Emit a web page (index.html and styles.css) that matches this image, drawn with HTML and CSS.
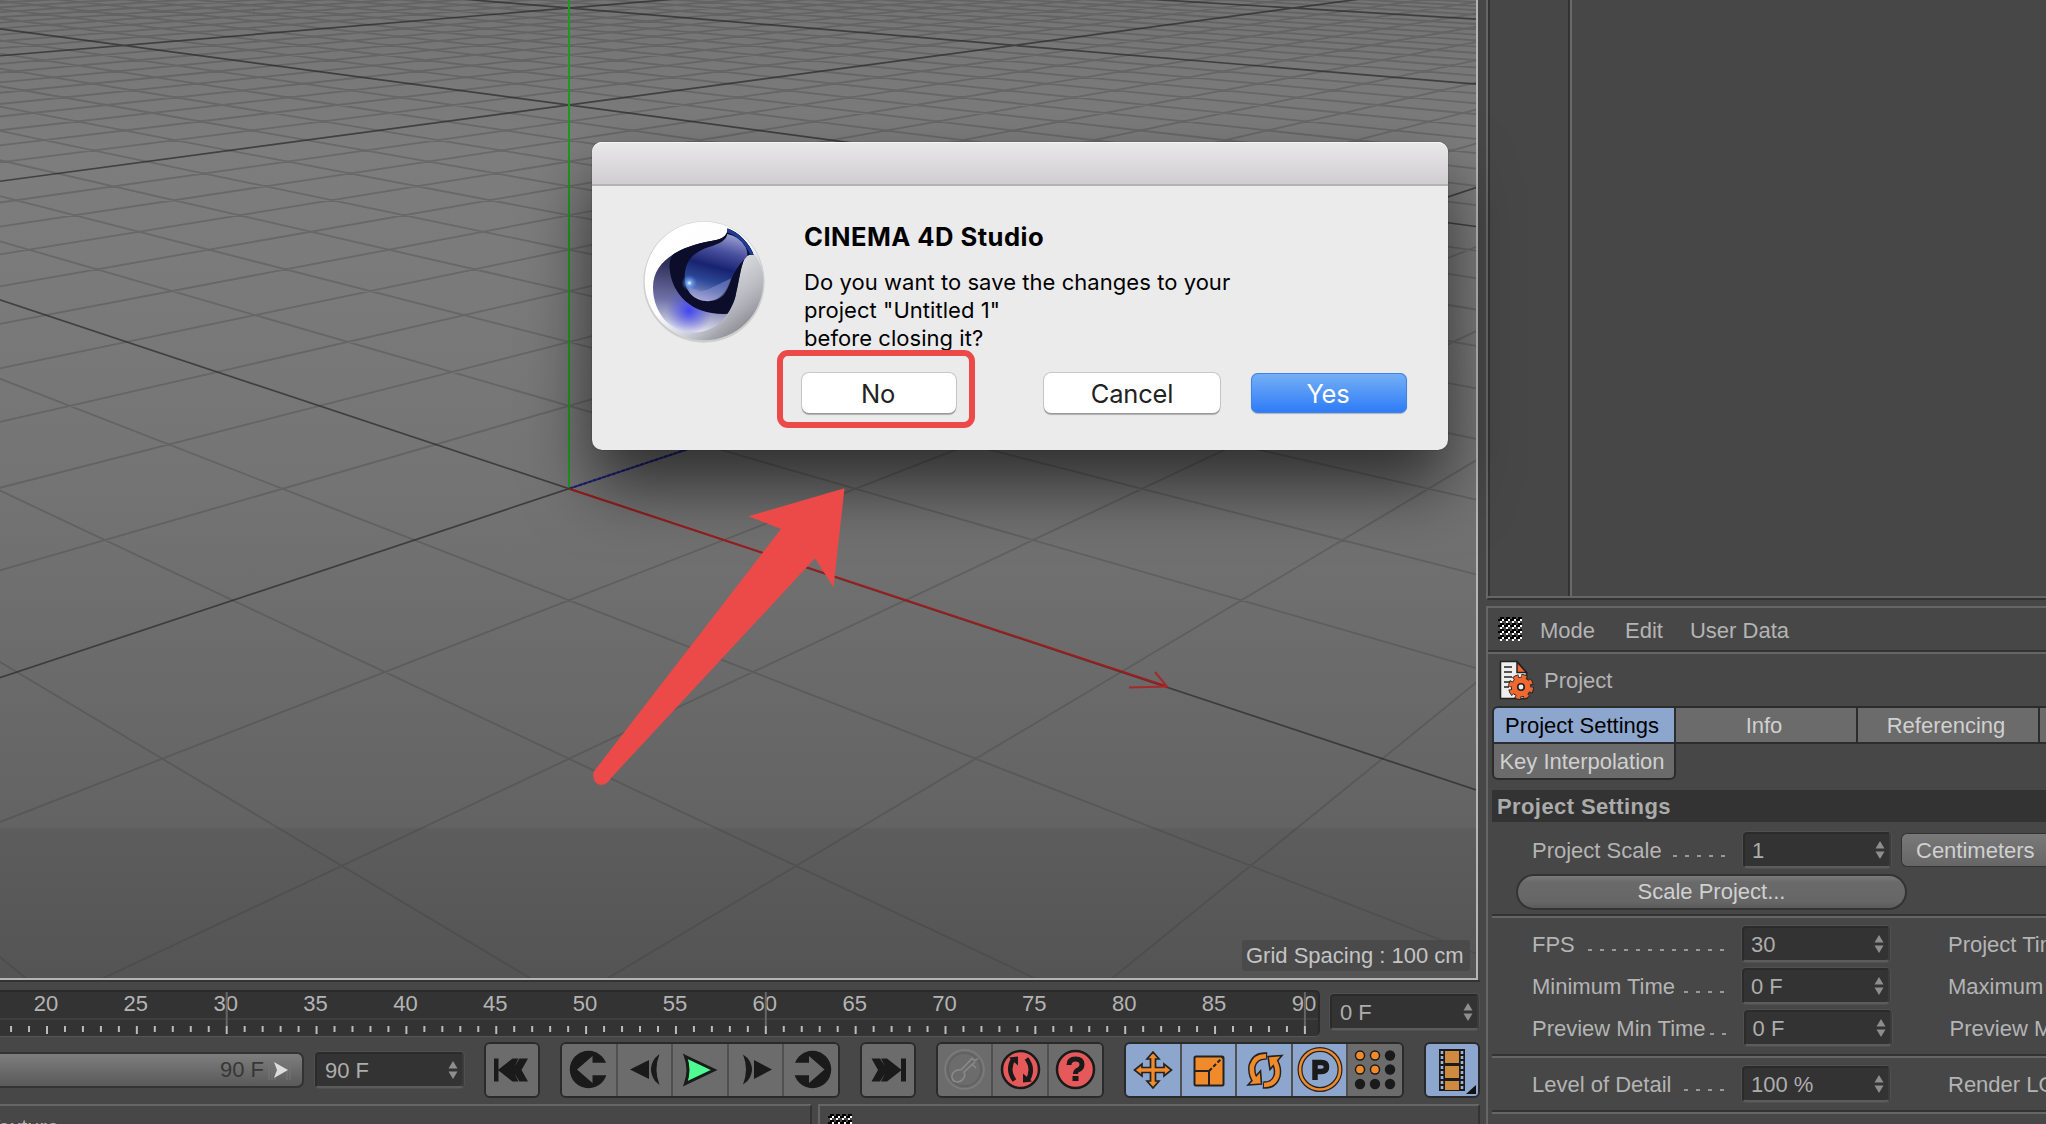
FILE: index.html
```html
<!DOCTYPE html>
<html lang="en">
<head>
<meta charset="utf-8">
<title>CINEMA 4D Studio</title>
<link rel="stylesheet" href="styles.css">
</head>
<body>
<svg class="defs" width="0" height="0" aria-hidden="true">
  <defs>
    <pattern id="grip-dots" width="6" height="6" patternUnits="userSpaceOnUse">
      <path d="M2 0h4v2h-2v2h-4v-2h2z" fill="#000"/><path d="M4 2h2v2h-2zM2 4h2v2h-2z" fill="#fff"/>
    </pattern>
    <symbol id="grip" viewBox="0 0 24 24"><rect width="24" height="24" fill="url(#grip-dots)"/></symbol>
    <symbol id="spin" viewBox="0 0 10 18"><path d="M5 0l4.500 7.500h-9zM5 18l4.500-7.500h-9z" fill="#8e8e8e"/></symbol>
  </defs>
</svg>

<div class="app">
  <main class="left">
    <section class="viewport">
      <svg class="scene" width="1476" height="978" viewBox="0 0 1476 978">
        <g id="grid"></g>
        <path d="M569 0V488" stroke="#1c9a1c" stroke-width="2"/>
        <path d="M569 488.700L700 445" stroke="#1b1b86" stroke-width="2" stroke-dasharray="4 1"/>
        <path d="M569 488.700L1167 686.500" stroke="#a01c1c" stroke-width="2"/>
        <path d="M1129 687.500L1167 686.500L1155 672" stroke="#a52a2a" stroke-width="2" fill="none"/>
      </svg>
      <div class="spacing">Grid Spacing : 100 cm</div>
    </section>

    <section class="timeline">
      <div class="ruler"><svg id="ruler" width="1318" height="45" viewBox="0 0 1318 45"></svg></div>
      <div class="field now"><span>0 F</span><svg class="spin"><use href="#spin"/></svg></div>
    </section>

    <section class="transport">
      <div class="range"><span>90 F</span><svg width="26" height="24" viewBox="0 0 26 24"><path d="M2 2v20M5 2v20M8 2v20M20 2v20M23 2v20" stroke="#777" stroke-width="1"/><path d="M7 4l14 8-14 8 3-8z" fill="#ddd"/></svg></div>
      <div class="field end"><span>90 F</span><svg class="spin"><use href="#spin"/></svg></div>

      <div class="group g1"><div class="btn"><svg viewBox="0 0 52 52"><path d="M8 14.500h4.500v11l14-11h6l-4 8 5-8h8.500l-6.500 11.500 6.500 11.500h-8.500l-5-8 4 8h-6l-14-11v11h-4.500z" fill="#1a1a1a"/></svg></div></div>

      <div class="group g2">
        <div class="btn"><svg viewBox="0 0 52 52"><circle cx="25.500" cy="25.500" r="18.700" fill="#1a1a1a"/><path d="M14 25.500L29.500 12v6.700H48v12.600H29.500V39z" fill="#6c6c6c"/></svg></div>
        <div class="btn"><svg viewBox="0 0 52 52"><path d="M12 25.500L31 16v19z M41.500 10q-6 15.500 0 31l-4.500-4q-8-11.500 0-23z" fill="#1a1a1a"/></svg></div>
        <div class="btn"><svg viewBox="0 0 52 52"><path d="M11.500 12.500L40 26 11.500 39.500q5-13.500 0-27z" fill="#4dfb92" stroke="#1a1a1a" stroke-width="3"/></svg></div>
        <div class="btn"><svg viewBox="0 0 52 52"><path d="M42 25.500L24 16v19z M13 10.500q6 15 0 30l4.500-3.500q9-11.500 0-23z" fill="#1a1a1a"/></svg></div>
        <div class="btn"><svg viewBox="0 0 52 52"><circle cx="27.500" cy="25.500" r="18.700" fill="#1a1a1a"/><path d="M39.500 25.500L24 12v6.700H6v12.600h18V39z" fill="#6c6c6c"/></svg></div>
      </div>

      <div class="group g3"><div class="btn"><svg viewBox="0 0 52 52"><path d="M44 14.500h-5v11l-14-11h-6l4 8-5-8H9.500l6.500 11.500-6.500 11.500H18l5-8-4 8h6l14-11v11h5z" fill="#1a1a1a"/></svg></div></div>

      <div class="group g4">
        <div class="btn"><svg viewBox="0 0 52 52"><g fill="none" stroke="#8b8b8b" stroke-width="1.500"><circle cx="25.500" cy="25.500" r="19.500" stroke="#7d7d7d"/><circle cx="25.500" cy="25.500" r="16.500" stroke="#606060"/><path d="M22 26L33 14.500l3 2 3-2M33 20l4 4M24.500 28.500L36 18M22 26c-5-1-10 3-9 8s8 5 11 1 2-5 .5-6.500"/></g></svg></div>
        <div class="btn"><svg viewBox="0 0 52 52"><circle cx="26.500" cy="25.500" r="18.500" fill="#e5595a" stroke="#1a1a1a" stroke-width="2.500"/><path d="M20.500 36.500q-8-10.500-1-22M32.500 14.500q8 10.500 1 22" stroke="#1a1a1a" stroke-width="4.500" fill="none"/><path d="M15 13.500l9-1v9zM38 37.500l-9 1v-9z" fill="#1a1a1a"/></svg></div>
        <div class="btn"><svg viewBox="0 0 52 52"><circle cx="26.500" cy="25.500" r="18.500" fill="#e5595a" stroke="#1a1a1a" stroke-width="2.500"/><path d="M20 21q0-6 6.500-6t6.500 5.500q0 4-4 5.500-2.500 1-2.500 4" stroke="#1a1a1a" stroke-width="5" fill="none"/><rect x="23.500" y="32" width="6" height="5" fill="#1a1a1a"/></svg></div>
      </div>

      <div class="group g5">
        <div class="btn on"><svg viewBox="0 0 52 52"><path d="M26 8l6 7h-3.500v8.500H37V20l7.500 6-7.500 6v-3.500h-8.500V37H32l-6 7-6-7h3.500v-8.500H15V32l-7.500-6 7.500-6v3.500h8.500V15H20z" fill="#f08a2a" stroke="#222" stroke-width="1.700"/></svg></div>
        <div class="btn on"><svg viewBox="0 0 52 52"><rect x="12.500" y="12.500" width="29" height="29" rx="1.500" fill="#f08a2a" stroke="#222" stroke-width="2"/><path d="M12.500 27H27v14.500" fill="none" stroke="#222" stroke-width="2"/><path d="M27 27L41 13" stroke="#222" stroke-width="2" stroke-dasharray="4 2"/></svg></div>
        <div class="btn on"><svg viewBox="0 0 52 52"><g fill="none"><path d="M29 12q-12-1-15 10-1 9 4 15M25 41q11 1 14-9 2-9-4-17" stroke="#222" stroke-width="7.500"/></g><path d="M44 11.500l-14 1 2 13zM10 41l13.500-1-1-13z" fill="#f08a2a" stroke="#222" stroke-width="1.600"/><path d="M28 12.200q-11-.5-14 9.800-1 9 4 15M26 41q10 0 13-9 2-9-4-17" stroke="#f08a2a" stroke-width="4.600" fill="none"/></svg></div>
        <div class="btn on"><svg viewBox="0 0 52 52"><circle cx="26" cy="25.500" r="20" fill="none" stroke="#222" stroke-width="5"/><circle cx="26" cy="25.500" r="20" fill="none" stroke="#f08a2a" stroke-width="2.600"/><path d="M21 36V18.500h6.500q5 0 5 4.500t-5 4.500H21" fill="none" stroke="#1a1a1a" stroke-width="5.500"/></svg></div>
        <div class="btn"><svg viewBox="0 0 52 52"><g fill="#1a1a1a"><circle cx="11" cy="11.500" r="5.200"/><circle cx="26" cy="11.500" r="5.200"/><circle cx="41" cy="11.500" r="5.200"/><circle cx="11" cy="25.500" r="5.200"/><circle cx="26" cy="25.500" r="5.200"/><circle cx="41" cy="25.500" r="5.200"/><circle cx="11" cy="40" r="5.200"/><circle cx="26" cy="40" r="5.200"/><circle cx="41" cy="40" r="5.200"/></g><g fill="#f08a2a"><circle cx="11" cy="11.500" r="3.800"/><circle cx="26" cy="11.500" r="3.800"/><circle cx="11" cy="25.500" r="3.800"/><circle cx="26" cy="25.500" r="3.800"/></g></svg></div>
      </div>

      <div class="group g6"><div class="btn on"><svg viewBox="0 0 52 52"><rect x="13" y="5" width="26" height="42" fill="#1a1a1a"/><path d="M19 7h14v12H19zM19 22h14v12H19zM19 37h14v9H19z" fill="#cf8a42"/><path d="M16 7v40M36 7v40" stroke="#9fb4d8" stroke-width="2.600" stroke-dasharray="3 2"/><path d="M50 41v9H40z" fill="#111"/></svg></div></div>
    </section>

    <section class="bottom">
      <div class="pane textures"><span>Texture</span></div>
      <div class="pane coords"><svg class="grip"><use href="#grip"/></svg></div>
    </section>
  </main>

  <aside class="right">
    <div class="objects"><div class="tree"></div></div>
    <div class="attributes">
      <nav class="menu"><svg class="grip"><use href="#grip"/></svg><span class="m1">Mode</span><span class="m2">Edit</span><span>User Data</span></nav>
      <div class="title">
        <svg width="36" height="40" viewBox="0 0 36 40"><path d="M1.500 1.500H18l9.500 11V38.500h-26z" fill="#eee" stroke="#222" stroke-width="1.500"/><path d="M18 2l9.500 10.500H18z" fill="#f0672f" stroke="#222" stroke-width="1.500"/><path d="M5 7h8M5 12h8M5 17h8M5 22h6M5 27h5" stroke="#222" stroke-width="1.700"/><g transform="translate(22 27)"><circle r="10" fill="none" stroke="#222" stroke-width="6" stroke-dasharray="5.450 2.404"/><circle r="10.300" fill="#222"/><circle r="9.800" fill="none" stroke="#f0672f" stroke-width="4.600" stroke-dasharray="4.200 3.497" stroke-dashoffset="-.5"/><circle r="9.400" fill="#f0672f"/><circle r="4" fill="#222"/><circle r="2.400" fill="#eee"/></g></svg>
        <span>Project</span>
      </div>
      <div class="tabs"><div class="tab active">Project Settings</div><div class="tab">Info</div><div class="tab">Referencing</div><div class="tab"></div></div>
      <div class="tabs second"><div class="tab">Key Interpolation</div></div>
      <h2>Project Settings</h2>
      <div class="row scale"><label>Project Scale</label><i class="dots" style="width:56px"></i><div class="field"><span>1</span><svg class="spin"><use href="#spin"/></svg></div><button class="unit">Centimeters</button></div>
      <button class="wide">Scale Project...</button>
      <hr>
      <div class="row"><label>FPS</label><i class="dots" style="width:140px"></i><div class="field"><span>30</span><svg class="spin"><use href="#spin"/></svg></div><label class="next">Project Time</label></div>
      <div class="row"><label>Minimum Time</label><i class="dots" style="width:44px"></i><div class="field"><span>0 F</span><svg class="spin"><use href="#spin"/></svg></div><label class="next">Maximum</label></div>
      <div class="row"><label>Preview Min Time</label><i class="dots" style="width:20px"></i><div class="field"><span>0 F</span><svg class="spin"><use href="#spin"/></svg></div><label class="next">Preview Max</label></div>
      <hr>
      <div class="row"><label>Level of Detail</label><i class="dots" style="width:44px"></i><div class="field"><span>100 %</span><svg class="spin"><use href="#spin"/></svg></div><label class="next">Render LOD</label></div>
      <hr>
    </div>
  </aside>
</div>

<div class="dialog">
  <div class="titlebar"></div>
  <div class="content">
    <svg class="logo" width="136" height="136" viewBox="0 0 408 408">
      <defs>
        <linearGradient id="shell" x1=".2" y1=".1" x2=".85" y2=".9"><stop offset="0" stop-color="#fff"/><stop offset=".45" stop-color="#fdfdff"/><stop offset=".7" stop-color="#d5d8e2"/><stop offset="1" stop-color="#88898f"/></linearGradient>
        <linearGradient id="rim" x1="0" y1="0" x2=".5" y2="1"><stop offset="0" stop-color="#f4f4f6"/><stop offset=".5" stop-color="#c6c7cc"/><stop offset="1" stop-color="#8f9096" stop-opacity="0"/></linearGradient>
        <linearGradient id="bowl" x1=".5" y1="0" x2=".4" y2="1"><stop offset="0" stop-color="#050720"/><stop offset=".4" stop-color="#34355f"/><stop offset=".7" stop-color="#7072a8"/><stop offset=".95" stop-color="#dcdcec"/></linearGradient>
        <radialGradient id="glow"><stop offset="0" stop-color="#3d42f5" stop-opacity=".95"/><stop offset="1" stop-color="#5558e8" stop-opacity="0"/></radialGradient>
        <linearGradient id="drop" x1=".65" y1="0" x2=".4" y2="1"><stop offset="0" stop-color="#989bd0"/><stop offset=".25" stop-color="#4a519f"/><stop offset=".5" stop-color="#18236f"/><stop offset=".72" stop-color="#2c4796"/><stop offset=".85" stop-color="#566bb0"/><stop offset="1" stop-color="#a7a9d8"/></linearGradient>
        <radialGradient id="spark"><stop offset="0" stop-color="#fff"/><stop offset=".3" stop-color="#78b4ff" stop-opacity=".8"/><stop offset="1" stop-color="#4a80e0" stop-opacity="0"/></radialGradient>
        <clipPath id="bowlclip"><path d="M293 62C292 84 275 90 240 97C160 112 70 150 70 235C70 315 125 371 190 371C265 371 305 310 318 260C330 210 336 150 352 140Q363 135 372 138C360 105 330 72 293 58z"/></clipPath>
      </defs>
      <g transform="translate(-19 -15)">
        <circle cx="223" cy="219" r="182" fill="#000" opacity=".12"/>
        <circle cx="223" cy="216" r="178" fill="url(#shell)"/>
        <path d="M352 140Q372 132 378 140Q401 172 401 216Q395 290 340 345Q300 385 223 394Q290 360 318 260C330 210 336 150 352 140z" fill="url(#rim)"/>
        <g clip-path="url(#bowlclip)">
          <rect x="60" y="50" width="330" height="330" fill="url(#bowl)"/>
          <circle cx="178" cy="305" r="70" fill="url(#glow)"/>
          <path d="M300 70C210 100 112 100 120 180C128 265 200 330 320 312L385 150L330 60z" fill="#0b0d2b"/>
          <path d="M290 58Q350 75 375 142" stroke="#1c3d94" stroke-width="22" fill="none"/>
        </g>
        <path d="M293 75C290 92 275 103 240 113C195 128 166 150 165 205C166 250 195 276 235 277C305 270 290 200 350 145Q357 136 348 115Q330 82 293 75z" fill="url(#drop)"/>
        <path d="M175 235L215 247L238 240L275 222L305 208C292 250 280 276 235 277Q190 272 175 235z" fill="#9a9cd2" opacity=".45"/>
        <circle cx="179" cy="222" r="24" fill="url(#spark)"/>
      </g>
    </svg>
    <div class="body">
      <h1>CINEMA 4D Studio</h1>
      <p>Do you want to save the changes to your<br>project "Untitled 1"<br>before closing it?</p>
      <div class="actions"><button class="no">No</button><button class="cancel">Cancel</button><button class="yes">Yes</button></div>
    </div>
  </div>
</div>

<div class="highlight"></div>
<svg class="pointer" width="270" height="310" viewBox="0 0 270 310"><path d="M264.500 8.300L168.500 36.300L201 49L13.500 292Q12 304 21 305Q27 305 31 298L235 78.300L253.500 107.300z" fill="#ec4a48"/></svg>

<script src="scene.js"></script>
</body>
</html>
```
FILE: styles.css
```css
* { box-sizing: border-box; }
body { margin: 0; width: 2046px; height: 1124px; overflow: hidden; background: #474747; color: #b4b4b4; font: 22px/26px "Liberation Sans", Arial, sans-serif; white-space: nowrap; }
button { font: inherit; border: 0; padding: 0; margin: 0; }
.defs { position: absolute; }
.app { display: grid; grid-template-columns: 1486px 560px; height: 1124px; overflow: hidden; }
.left { display: flex; flex-direction: column; min-width: 0; height: 1124px; overflow: hidden; }

.viewport { position: relative; flex: none; width: 1478px; height: 980px; border: solid #b5b5b5; border-width: 0 2px 2px 0; overflow: hidden;
  background: linear-gradient(#747474 0, #7d7d7d 150px, #7b7b7b 260px, #747474 480px, #636363 827px, #5d5d5d 829px, #545454 978px); }
.scene { display: block; }
.spacing { position: absolute; right: 6px; bottom: 7px; width: 228px; height: 31px; padding-left: 4px; line-height: 31px; background: #4a4a4a; color: #c4c4c4; border-radius: 3px; }

.timeline { flex: none; display: flex; width: 1480px; height: 62px; padding-top: 8px; border-top: 2px solid #333; gap: 10px; }
.ruler { width: 1320px; height: 46px; background: #333; border: solid #2a2a2a; border-width: 2px 2px 0 0; box-shadow: 0 1px 0 #555; border-radius: 0 5px 5px 0; overflow: hidden; }
.ruler svg { display: block; }
.field { display: flex; align-items: center; justify-content: space-between; width: 149px; height: 36px; padding: 0 4px 0 8px; background: #333; border: 2px solid #2b2b2b; border-right-color: #3c3c3c; border-bottom-color: #5c5c5c; border-radius: 4px; box-shadow: 0 0 0 1px #505050; color: #adadad; flex: none; }
.field span { position: relative; top: 1px; }
.spin { width: 10px; height: 18px; }
.now { margin-top: 4px; }

.transport { flex: none; display: flex; align-items: center; height: 56px; width: 1480px; }
.range { width: 304px; height: 36px; margin-right: 11px; display: flex; align-items: center; justify-content: flex-end; gap: 3px; padding-right: 9px; color: #373737; background: linear-gradient(#7e7e7e, #595959); border: 2px solid #333; border-left: 0; border-radius: 0 7px 7px 0; }
.group { display: flex; gap: 2px; height: 56px; border: 2px solid #2a2a2a; border-radius: 6px; overflow: hidden; background: #505050; flex: none; }
.btn { flex: 1; background: #6c6c6c; display: flex; align-items: center; justify-content: center; }
.btn svg { width: 52px; height: 52px; flex: none; }
.btn.on { background: #8da6ce; }
.g1 { width: 56px; margin-left: 20px; }
.g2 { width: 280px; margin-left: 20px; }
.g3 { width: 56px; margin-left: 20px; }
.g4 { width: 168px; margin-left: 20px; }
.g5 { width: 280px; margin-left: 20px; }
.g6 { width: 56px; margin-left: 20px; }

.bottom { display: flex; flex: 1; gap: 6px; padding-top: 6px; width: 1480px; }
.pane { border-top: 2px solid #666; border-right: 2px solid #333; overflow: hidden; }
.textures { width: 812px; }
.textures span { display: block; margin: 9px 0 0 -13px; line-height: 26px; }
.coords { flex: 1; border-left: 2px solid #666; padding: 8px 0 0 8px; }
.grip { display: block; width: 24px; height: 24px; flex: none; }

.right { display: flex; flex-direction: column; height: 1124px; overflow: hidden; }
.objects { flex: none; height: 600px; border-left: 2px solid #666; border-bottom: 2px solid #333; box-shadow: inset 0 -2px #666, inset 2px 0 #333; }
.tree { width: 84px; height: 596px; border-right: 2px solid #6a6a6a; box-shadow: inset -2px 0 #333; }
.attributes { flex: none; margin-top: 6px; height: 518px; border-left: 2px solid #666; border-top: 2px solid #666; padding-left: 4px; }
.menu { display: flex; align-items: center; height: 46px; margin-left: -4px; padding: 1px 0 0 10px; border-bottom: 2px solid #666; box-shadow: inset 0 -2px #333; }
.menu .grip { position: relative; top: -2px; }
.m1 { margin: 0 30px 0 18px; }
.m2 { margin-right: 27px; }
.title { display: flex; align-items: center; height: 52px; padding-left: 7px; gap: 9px; }
.title span { position: relative; top: 1px; }
.tabs { display: flex; gap: 2px; width: 554px; height: 38px; padding: 2px 0 2px 2px; background: #2c2c2c; border-radius: 6px 0 0 0; }
.tab { flex: none; width: 180px; height: 34px; padding-right: 4px; line-height: 35px; text-align: center; background: #6b6b6b; color: #d0d0d0; }
.tab.active { background: #8da6ce; color: #000; border-top-left-radius: 4px; }
.second { height: 36px; padding-top: 0; width: 184px; border-radius: 0 0 6px 6px; }
.second .tab { border-radius: 0 0 4px 4px; }
h2 { margin: 10px 0 10px; height: 32px; padding-left: 5px; font-size: 22px; line-height: 34px; letter-spacing: .4px; background: #333; color: #ababab; }
.row { display: flex; align-items: center; height: 36px; margin: 0 0 6px 40px; }
.row label { flex: 1; }
.row label.next { flex: none; width: 98px; margin-left: 58px; overflow: hidden; }
.row label, .row .unit { padding-top: 2px; }
.dots { flex: none; height: 2px; margin: 11px 18px 0 0; background: repeating-linear-gradient(to left, #999 0 4px, transparent 4px 12px); }
.row .field { width: 148px; padding-left: 7px; }
.unit { width: 145px; height: 34px; flex: none; margin-left: 10px; padding-left: 14px; text-align: left; color: #d0d0d0; background: linear-gradient(#797979, #666); border: 2px solid #333; border-width: 1px 0 1px 1px; border-radius: 6px 0 0 6px; line-height: 26px; }
.wide { display: block; width: 391px; height: 36px; margin: 0 0 4px 24px; border: 2px solid #333; border-radius: 18px; background: linear-gradient(#7a7a7a, #6a6a6a 20%, #666 80%, #5b5b5b); color: #d0d0d0; }
hr { height: 4px; border: 0; margin: 0 0 8px; background: linear-gradient(#333 50%, #666 50%); }
.row + hr { margin-top: 8px; }

.dialog { position: absolute; left: 592px; top: 142px; width: 856px; height: 308px; border-radius: 10px; background: #ebebeb; box-shadow: 0 0 1px rgba(0,0,0,.7), 0 36px 66px rgba(0,0,0,.6); color: #000; font-family: Inter, sans-serif; }
.titlebar { height: 44px; border-radius: 10px 10px 0 0; background: linear-gradient(#eae9ea, #cfcdd0); border-bottom: 2px solid #b4b2b5; box-shadow: inset 0 1px #f6f6f6; }
.content { display: flex; padding: 28px 0 0 44px; }
.logo { flex: none; }
.body { margin-left: 32px; padding-top: 9px; }
h1 { margin: 0 0 17px; font-size: 25.6px; line-height: 28px; font-weight: 700; letter-spacing: .45px; }
p { margin: 0; font-size: 22px; line-height: 28px; letter-spacing: .05px; }
.actions { display: flex; margin: 21px 0 0 -2px; }
.actions button { height: 40px; border-radius: 7px; background: #fff; color: #222; font-size: 25.500px; line-height: 39px; letter-spacing: -.2px; box-shadow: 0 0 0 1px rgba(0,0,0,.14), 0 2px 1px rgba(0,0,0,.25); }
.actions .no { width: 154px; padding-right: 2px; }
.actions .cancel { width: 176px; margin-left: 88px; }
.actions .yes { width: 156px; margin-left: 31px; padding-right: 2px; color: #fff; background: linear-gradient(#76b1f5, #2d7af8); box-shadow: inset 0 0 0 1px #3c84e8, 0 1px 1px rgba(0,0,0,.25); }
.highlight { position: absolute; left: 777px; top: 350px; width: 198px; height: 78px; border: 6px solid #ec4a48; border-radius: 11px; }
.pointer { position: absolute; left: 580px; top: 480px; }
```
FILE: scene.js
```js
const NS = 'http://www.w3.org/2000/svg';
function add(parent, tag, attrs, text) {
  const el = document.createElementNS(NS, tag);
  for (const k in attrs) el.setAttribute(k, attrs[k]);
  if (text !== undefined) el.textContent = text;
  parent.appendChild(el);
}

// Ground plane: (i, j) grid coordinates to screen, horizon at y = -154.6
function project(i, j) {
  const w = 6.765 - (i + j) / 2;
  return [(569 + 484.5 * 2 * (i - j) / 2 / w * 2).toFixed(1), (4352 / w - 154.6).toFixed(1)];
}
function lines(major) {
  let d = '';
  for (let n = -70; n <= 12; n++) {
    if ((n % 10 === 0) !== major) continue;
    const near = 11 - n;
    d += 'M' + project(n, -70) + 'L' + project(n, near);
    d += 'M' + project(-70, n) + 'L' + project(near, n);
  }
  return d;
}
const grid = document.getElementById('grid');
add(grid, 'path', { d: lines(false), stroke: '#3c3c3c', 'stroke-opacity': .3, 'stroke-width': 1.8 });
add(grid, 'path', { d: lines(true), stroke: '#2a2a2a', 'stroke-opacity': .72, 'stroke-width': 1.7 });

// Frame ruler
const ruler = document.getElementById('ruler');
add(ruler, 'path', { d: 'M0 27H1318', stroke: '#3f3f3f', 'stroke-width': 2 });
for (let f = 18; f <= 90; f++) {
  const x = 47 + (f - 20) * 17.97, major = f % 5 === 0;
  if (major) add(ruler, 'text', { x: x - 1, y: 18.5, 'text-anchor': 'middle', fill: '#b4b4b4' }, f);
  if (f % 30 === 0) add(ruler, 'path', { d: `M${x} 0V34`, stroke: '#666', 'stroke-width': 2 });
  add(ruler, 'path', { d: `M${x} 34V${major ? 42 : 40}`, stroke: '#bbb', 'stroke-width': 2 });
}
```
